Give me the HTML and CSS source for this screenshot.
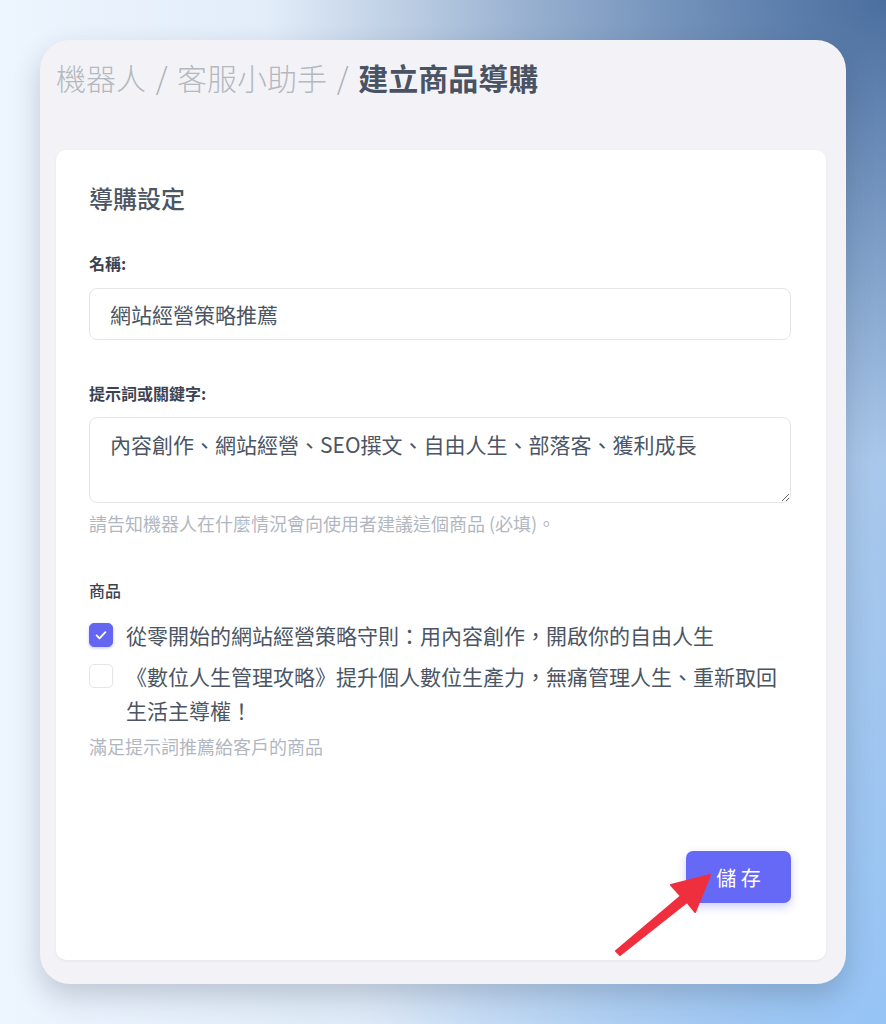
FILE: index.html
```html
<!DOCTYPE html>
<html lang="zh-Hant">
<head>
    <meta charset="UTF-8">
    <meta name="viewport" content="width=device-width, initial-scale=1.0">
    <title>建立商品導購</title>
<link rel="stylesheet" href="styles.css">
</head>
<body>
    <div class="page">
        <div class="panel">
            <!-- 麵包屑 -->
            <div class="breadcrumb">
                <span class="crumb">機器人</span>
                <span class="sep">/</span>
                <span class="crumb">客服小助手</span>
                <span class="sep">/</span>
                <span class="crumb current">建立商品導購</span>
            </div>

            <div class="card">
                <h2 class="card-title">導購設定</h2>

                <label class="field-label label-name">名稱:</label>
                <input class="text-input" type="text" value="網站經營策略推薦">

                <label class="field-label label-keyword">提示詞或關鍵字:</label>
                <textarea class="text-area">內容創作、網站經營、SEO撰文、自由人生、部落客、獲利成長</textarea>
                <p class="help">請告知機器人在什麼情況會向使用者建議這個商品 (必填)。</p>

                <div class="field-label label-product">商品</div>
                <div class="product-list">
                    <label class="product">
                        <span class="box checked">
                            <svg viewBox="0 0 16 16" width="16" height="16"><path d="M3.6 8.4l2.9 2.9 5.9-6.2" fill="none" stroke="#fff" stroke-width="1.8" stroke-linecap="round" stroke-linejoin="round"/></svg>
                        </span>
                        <span class="product-name">從零開始的網站經營策略守則：用內容創作，開啟你的自由人生</span>
                    </label>
                    <label class="product">
                        <span class="box"></span>
                        <span class="product-name">《數位人生管理攻略》提升個人數位生產力，無痛管理人生、重新取回生活主導權！</span>
                    </label>
                </div>
                <p class="help help-product">滿足提示詞推薦給客戶的商品</p>

                <div class="actions">
                    <button class="save-btn">儲 存</button>
                </div>
            </div>

            <!-- 標示箭頭 -->
            <svg class="pointer" viewBox="0 0 120 110" width="120" height="110">
                <polygon points="110,20 71,30 81,41 16,96 20,100 87,47 95,57" fill="#ef2f3d" stroke="#ef2f3d" stroke-width="2" stroke-linejoin="round"/>
            </svg>
        </div>
    </div>
</body>
</html>
```

FILE: styles.css
```css
body {
    margin: 0;
    font-family: 'Noto Sans CJK TC', 'Noto Sans', sans-serif;
}

.page {
    box-sizing: border-box;
    min-height: 1024px;
    padding: 40px;
    border-bottom: 3px solid #a3acb5;
    background:
        radial-gradient(ellipse 70% 45% at 100% 0%, rgba(70, 106, 155, 0.95) 0%, rgba(70, 106, 155, 0) 100%),
        radial-gradient(ellipse 60% 60% at 100% 100%, rgba(150, 196, 245, 1) 0%, rgba(150, 196, 245, 0) 100%),
        linear-gradient(90deg, #edf5fe 0%, #dde9f7 45%, #a9c7ea 100%);
}

.panel {
    position: relative;
    box-sizing: border-box;
    width: 806px;
    height: 944px;
    display: flex;
    flex-direction: column;
    padding: 17px 20px 24px 16px;
    background: #f3f3f7;
    border-radius: 30px;
    box-shadow: 0 12px 28px rgba(40, 50, 70, 0.22);
}

.breadcrumb {
    font-size: 30px;
    line-height: 40px;
    color: #b4b8c0;
    font-weight: 300;
    white-space: nowrap;
}

.sep {
    margin: 0 3px;
    color: #a9aeb6;
}

.current {
    color: #4a5363;
    font-weight: 700;
}

.card {
    flex: 1;
    display: flex;
    flex-direction: column;
    margin-top: 53px;
    padding: 33px 35px 57px 33px;
    background: #fff;
    border-radius: 10px;
    box-shadow: 0 1px 3px rgba(0, 0, 0, 0.06);
}

.card-title {
    margin: 0;
    font-size: 24px;
    line-height: 30px;
    font-weight: 500;
    color: #4b5563;
}

.field-label {
    display: block;
    font-size: 16px;
    line-height: 22px;
    font-weight: 700;
    color: #3b4352;
}

.label-name {
    margin-top: 39px;
}

.label-keyword {
    margin-top: 42px;
}

.label-product {
    margin-top: 45px;
    font-weight: 500;
}

.text-input,
.text-area {
    box-sizing: border-box;
    width: 100%;
    border: 1px solid #e3e5e9;
    border-radius: 8px;
    font-family: inherit;
    font-size: 21px;
    color: #4b5563;
    padding: 0 20px;
    outline: none;
}

.text-input {
    height: 52px;
    margin-top: 14px;
}

.text-area {
    height: 86px;
    margin-top: 13px;
    padding-top: 13px;
    line-height: 26px;
    resize: vertical;
}

.help {
    margin: 9px 0 0;
    font-size: 18px;
    line-height: 22px;
    color: #b2b7bf;
}

.product-list {
    display: flex;
    flex-direction: column;
    gap: 7px;
    margin-top: 17px;
}

.product {
    display: flex;
    align-items: flex-start;
    gap: 13px;
    cursor: pointer;
}

.box {
    flex-shrink: 0;
    box-sizing: border-box;
    width: 24px;
    height: 24px;
    margin-top: 5px;
    border: 1px solid #e3e5e9;
    border-radius: 5px;
    background: #fff;
    display: flex;
    align-items: center;
    justify-content: center;
}

.box.checked {
    background: #6466f1;
    border-color: #6466f1;
    box-shadow: 0 1px 3px rgba(99, 102, 241, 0.4);
}

.product-name {
    font-size: 21px;
    line-height: 34px;
    color: #4b5563;
}

.help-product {
    margin-top: 8px;
}

.actions {
    margin-top: auto;
    display: flex;
    justify-content: flex-end;
}

.save-btn {
    width: 105px;
    height: 52px;
    border: none;
    border-radius: 7px;
    background: #6668f6;
    color: #fff;
    font-family: inherit;
    font-size: 20px;
    cursor: pointer;
    box-shadow: 0 4px 10px rgba(99, 102, 241, 0.3);
}

.pointer {
    position: absolute;
    left: 560px;
    top: 815px;
}
```
